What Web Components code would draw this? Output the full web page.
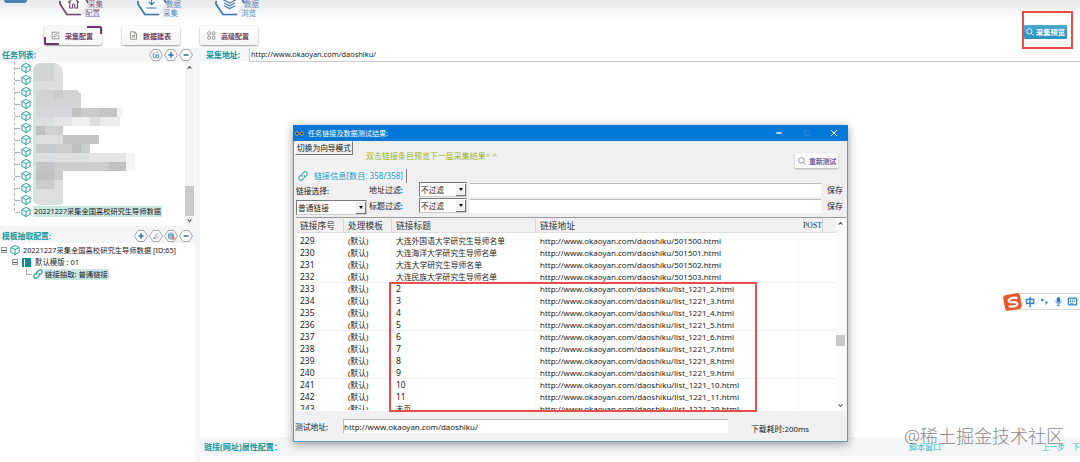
<!DOCTYPE html>
<html>
<head>
<meta charset="utf-8">
<title>采集配置</title>
<style>
    html, body {
        margin: 0;
        height: 462px;
        overflow: hidden;
        background: #fff;
    }

    body {
        font-family: "Noto Sans", "Noto Sans CJK SC", sans-serif;
        font-size: 8px;
        color: #222;
        --teal: #16989c;
        --panel: #f4f5f6;
    }
</style>
</head>
<body>
<collector-app></collector-app>

<script>
function define(name, html, setup) {
    const template = document.createElement('template');
    template.innerHTML = html;

    window.customElements.define(name, class extends HTMLElement {
        constructor() {
            super();
            this.attachShadow({ mode: 'open' });
            this.shadowRoot.appendChild(template.content.cloneNode(true));
        }

        connectedCallback() {
            if (setup && !this.ready) {
                this.ready = true;
                setup.call(this, this.shadowRoot);
            }
        }
    });
}

// one line of text, sized and tracked so that it fills the given width
define('fit-text', `
    <style>
        :host {
            display: block;
            flex: none;
            width: max-content;
            white-space: nowrap;
            line-height: 12px;
        }
    </style>
    <slot></slot>
`, function () {
    const target = Number(this.getAttribute('w'));
    if (!target) return;
    let real = this.getBoundingClientRect().width;
    const scale = Math.min(1.09, Math.max(0.88, target / real));
    this.style.fontSize = parseFloat(getComputedStyle(this).fontSize) * scale + 'px';
    real = this.getBoundingClientRect().width;
    this.style.letterSpacing = (target - real) / this.textContent.length + 'px';
    this.style.width = target + 'px';
});

const icons = {
    home: '<path d="M2 11 L12 2 L22 11 M5 9 V21 H10 V15 Q12 12 14 15 V21 H19 V9"/>',
    down: '<path d="M12 2 V15 M7 10 L12 15 L17 10 M3 21 H21"/>',
    layers: '<path d="M12 2 L22 7 L12 12 L2 7Z M2 12 L12 17 L22 12 M2 17 L12 22 L22 17"/>',
    edit: '<path d="M21 11 V21 H3 V3 H15 M8 16 L9 12 L19 2 L22 5 L12 15Z"/>',
    doc: '<path d="M4 2 H15 L20 7 V22 H4Z M15 2 V7 H20 M8 12 H16 M8 16 H16"/>',
    grid: '<rect x="2" y="2" width="7" height="8" rx="2"/><rect x="14" y="2" width="7" height="8" rx="2"/><rect x="2" y="14" width="7" height="8" rx="2"/><rect x="14" y="14" width="7" height="8" rx="2"/>',
    cube: '<path d="M12 1 L22 6 V17 L12 23 L2 17 V6Z M2 6 L12 11 L22 6 M12 11 V23"/>',
    link: '<path d="M10 14 C7 11 8 9 10 7 L14 3 C19 -1 25 5 21 10 L17 14 M14 10 C17 13 16 15 14 17 L10 21 C5 25 -1 19 3 14 L7 10"/>',
    search: '<circle cx="10" cy="10" r="8"/><path d="M16 16 L23 23"/>',
    plus: '<path d="M12 3 V21 M3 12 H21"/>',
    minus: '<path d="M4 12 H20"/>',
    import: '<path d="M3 3 V21 H21 V9 M7 7 L16 16 M16 9 V16 H9 M12 3 H19"/>',
    pick: '<path d="M5 20 L17 3 M3 21 H11"/><path d="M14 13 L21 20 M21 13 L14 20" stroke="#d77"/>',
    data: '<ellipse cx="12" cy="5" rx="8" ry="3"/><path d="M4 5 V20 Q12 25 20 20 V5 M4 10 Q12 14 20 10 M4 15 Q12 19 20 15"/><path d="M15 15 H23 V23 H15Z" stroke="#d66"/>',
    up: '<path d="M3 17 L12 7 L21 17"/>',
    chev: '<path d="M3 7 L12 17 L21 7"/>',
    mic: '<rect x="8" y="1" width="8" height="13" rx="4" fill="currentColor"/><path d="M4 10 Q5 18 12 18 Q19 18 20 10 M12 18 V23 M7 23 H17"/>',
    keys: '<rect x="1" y="3" width="22" height="18" rx="2"/><path d="M5 8 H19 M5 12 H19 M7 17 H17" stroke-dasharray="3 2"/>',
    punct: '<circle cx="6" cy="8" r="3.5" fill="currentColor" stroke="none"/><path d="M18 13 Q20 18 15 21"/><circle cx="17" cy="14" r="3" fill="currentColor" stroke="none"/>'
};

define('ui-icon', `
    <style>
        :host { display: block; flex: none; width: 12px; height: 12px; }
        svg { display: block; width: 100%; height: 100%; fill: none; stroke: currentColor; overflow: visible; }
    </style>
    <svg viewBox="0 0 24 24"></svg>
`, function (root) {
    const svg = root.querySelector('svg');
    svg.innerHTML = icons[this.getAttribute('name')] || '';
    svg.setAttribute('stroke-width', this.getAttribute('weight') || 2);
});

// large hexagon item of the main navigation, cut by the top of the window
define('nav-item', `
    <style>
        :host { display: flex; width: 78px; height: 17px; }
        svg { flex: none; width: 30px; height: 17px; overflow: visible; }
        .hex { fill: #fafafc; stroke: #d8d8de; stroke-width: 1; }
        .edge { fill: none; stroke: currentColor; stroke-width: 1.7; }
        .label { display: flex; flex-direction: column; opacity: .85; }
        ::slotted(fit-text) { line-height: 9px; }
        ::slotted(fit-text:first-child) { margin-left: -1px; }
        ::slotted(fit-text:last-child) { margin-left: -4px; }
        .glyph { fill: none; stroke: currentColor; stroke-width: 2; }
    </style>
    <svg viewBox="0 0 30 17">
        <path class="hex" d="M7 -8 H22 L30 3 L22 15 H7 L0 3Z"/>
        <path class="edge" d="M1 1 V4 L8 14.500 H22"/>
        <path class="edge" d="M27 -1 L29 3"/>
        <g class="glyph" transform="translate(8 -3.500) scale(.55)"></g>
    </svg>
    <div class="label"><slot></slot></div>
`, function (root) {
    root.querySelector('.glyph').innerHTML = icons[this.getAttribute('icon')];
});

define('sub-button', `
    <style>
        :host {
            box-sizing: border-box;
            display: flex;
            align-items: center;
            gap: 5px;
            width: 58px;
            height: 19px;
            padding-left: 7px;
            border-radius: 2px;
            background: linear-gradient(#fff, #f4f4f5);
            box-shadow: 0 1px 2px #9a9a9a, 0 0 1px #ccc;
            color: #70416a;
            font-weight: bold;
        }
        :host([active]) {
            background:
                linear-gradient(#6b3a63, #6b3a63) 100% 0 / 15px 2px no-repeat,
                linear-gradient(#6b3a63, #6b3a63) 100% 0 / 2px 8px no-repeat,
                linear-gradient(#6b3a63, #6b3a63) 0 100% / 15px 2px no-repeat,
                linear-gradient(#6b3a63, #6b3a63) 0 100% / 2px 8px no-repeat,
                #f8f8f9;
        }
        ui-icon { width: 9px; height: 9px; color: #777; }
    </style>
    <ui-icon></ui-icon><slot></slot>
`, function (root) {
    const icon = document.createElement('ui-icon');
    icon.setAttribute('name', this.getAttribute('icon'));
    root.querySelector('ui-icon').replaceWith(icon);
});

define('app-header', `
    <style>
        :host {
            display: flex;
            flex-direction: column;
            height: 48px;
            background: linear-gradient(#e6e8ed, #f8f9fa 14px, #fff 22px);
        }
        .nav { display: flex; height: 26px; }
        .logo { width: 23px; height: 3px; margin-left: 4px; border-radius: 0 0 6px 6px; background: #4684b8; }
        nav-item { color: #3a79b0; }
        nav-item:nth-of-type(1) { margin-left: 32px; color: #74476f; }
        .sub { display: flex; gap: 20px; padding-left: 44px; }
    </style>
    <div class="nav">
        <div class="logo"></div>
        <nav-item icon="home"><fit-text w="15">采集</fit-text><fit-text w="15">配置</fit-text></nav-item>
        <nav-item icon="down"><fit-text w="15">数据</fit-text><fit-text w="15">采集</fit-text></nav-item>
        <nav-item icon="layers"><fit-text w="15">数据</fit-text><fit-text w="15">浏览</fit-text></nav-item>
    </div>
    <div class="sub">
        <sub-button icon="edit" active><fit-text w="28">采集配置</fit-text></sub-button>
        <sub-button icon="doc"><fit-text w="28">数据建表</fit-text></sub-button>
        <sub-button icon="grid"><fit-text w="28">高级配置</fit-text></sub-button>
    </div>
`);

define('hex-button', `
    <style>
        :host { display: block; width: 14px; height: 12px; color: #3b78b5; }
        svg { display: block; width: 14px; height: 12px; overflow: visible; }
        .hex { fill: #fbfbfc; stroke: #8e9499; stroke-width: .8; }
        .glyph { fill: none; stroke: currentColor; }
    </style>
    <svg viewBox="0 0 14 12">
        <path class="hex" d="M4 .5 H10 L13.500 6 L10 11.500 H4 L.5 6Z"/>
        <g class="glyph"></g>
    </svg>
`, function (root) {
    const name = this.getAttribute('icon');
    const bold = name === 'plus' || name === 'minus';
    const g = root.querySelector('.glyph');
    g.innerHTML = icons[name];
    g.setAttribute('transform', bold ? 'translate(3.4 2.4) scale(.3)' : 'translate(3.4 2.4) scale(.3)');
    g.setAttribute('stroke-width', bold ? 5.5 : 2.4);
});

define('panel-title', `
    <style>
        :host {
            box-sizing: border-box;
            display: flex;
            align-items: center;
            justify-content: space-between;
            height: 14px;
            padding: 0 0 0 2px;
            color: var(--teal);
            font-weight: bold;
        }
        .tools { display: flex; gap: 1px; }
    </style>
    <slot></slot>
    <div class="tools"><slot name="tools"></slot></div>
`);

define('scroll-bar', `
    <style>
        :host {
            box-sizing: border-box;
            display: flex;
            flex-direction: column;
            align-items: center;
            width: 9px;
            padding: 3px 0;
            background: #f3f3f3;
            color: #555;
        }
        ui-icon { width: 5px; height: 5px; }
        .thumb { width: 100%; background: #c9c9c9; margin: auto 0 0; }
        .rest { flex: none; }
    </style>
    <ui-icon name="up" weight="5"></ui-icon>
    <div class="thumb"></div>
    <div class="rest"></div>
    <ui-icon name="chev" weight="5"></ui-icon>
`, function (root) {
    root.querySelector('.thumb').style.height = this.getAttribute('thumb') + 'px';
    root.querySelector('.rest').style.height = this.getAttribute('rest') + 'px';
});

define('task-list', `
    <style>
        :host { display: flex; height: 164px; background: #fff; }
        .tree {
            flex: 1;
            display: grid;
            grid-template: 1fr / 15px 17px 1fr;
            overflow: hidden;
        }
        .rail { border-right: 1px dashed #b5b5b5; height: 149px; }
        .nodes { display: flex; flex-direction: column; }
        .node { display: flex; align-items: center; height: 12px; gap: 1px; color: #2aa39b; }
        .node::before { content: ""; width: 5px; border-top: 1px dashed #aaa; }
        .node ui-icon { width: 10px; height: 10px; }
        .names { display: flex; flex-direction: column; padding-left: 1px; }
        svg { display: block; height: 144px; width: 140px; }
        .picked { align-self: flex-start; background: #cbe7e2; padding: 0 1px; height: 11px; }
        fit-text { line-height: 11px; }
        scroll-bar { margin-right: 1px; }
    </style>
    <div class="tree">
        <div class="rail"></div>
        <div class="nodes"></div>
        <div class="names">
            <svg viewBox="33 62 140 144">
                <path d="M40 63 H54 Q63 64 63 74 V203 Q60 206 54 205 H40 Q34 204 33 200 V70 Q34 64 40 63Z" fill="#dcdfe0"/>
                <path d="M40 63 H54 V81 H33 V70 Q34 64 40 63Z" fill="#d2d5d6"/>
                <path d="M36 90 H77 L81 94 V108 H36Z" fill="#d0d4d5"/>
                <rect x="54" y="90" width="9" height="9" fill="#c8cbcc"/>
                <rect x="36" y="108" width="36" height="9" fill="#d4d8da"/>
                <rect x="72" y="108" width="9" height="9" fill="#bfc0c0"/>
                <rect x="81" y="108" width="18" height="9" fill="#c9cacb"/>
                <rect x="99" y="108" width="18" height="9" fill="#c3c4c4"/>
                <rect x="117" y="108" width="6" height="9" fill="#f1f1f1"/>
                <rect x="54" y="117" width="18" height="9" fill="#e5e5e5"/>
                <rect x="72" y="117" width="18" height="9" fill="#eeeeee"/>
                <rect x="90" y="117" width="10" height="9" fill="#dddddd"/>
                <rect x="100" y="117" width="20" height="9" fill="#ececec"/>
                <rect x="36" y="126" width="9" height="9" fill="#bfc2c3"/>
                <rect x="45" y="126" width="18" height="9" fill="#ced0d1"/>
                <rect x="63" y="135" width="36" height="9" fill="#c3c4c4"/>
                <rect x="36" y="144" width="18" height="9" fill="#c8cbcb"/>
                <rect x="54" y="144" width="36" height="9" fill="#cbcccc"/>
                <rect x="72" y="144" width="9" height="9" fill="#bdbebe"/>
                <rect x="54" y="153" width="36" height="9" fill="#dedfdf"/>
                <rect x="90" y="153" width="36" height="9" fill="#e4e4e4"/>
                <rect x="36" y="162" width="18" height="9" fill="#c3c5c6"/>
                <rect x="54" y="162" width="55" height="9" fill="#cccdcd"/>
                <rect x="109" y="162" width="17" height="9" fill="#c0c1c1"/>
                <rect x="126" y="153" width="9" height="18" fill="#f6f6f6"/>
                <rect x="36" y="171" width="18" height="9" fill="#bec1c2"/>
                <rect x="54" y="171" width="9" height="9" fill="#c9cccc"/>
                <rect x="36" y="180" width="18" height="9" fill="#cacdce"/>
            </svg>
            <div class="picked"><fit-text w="127">20221227采集全国高校研究生导师数据</fit-text></div>
        </div>
    </div>
    <scroll-bar thumb="30" rest="2"></scroll-bar>
`, function (root) {
    root.querySelector('.nodes').innerHTML =
        '<div class="node"><ui-icon name="cube" weight="2.4"></ui-icon></div>'.repeat(13);
});

define('template-tree', `
    <style>
        :host { display: block; flex: 1; background: #fff; padding-top: 1px; }
        .row { display: flex; align-items: center; height: 12px; gap: 3px; padding-left: 1px; }
        .r2 { padding-left: 12px; gap: 4px; }
        .r3 { padding-left: 26px; gap: 1px; }
        .box {
            box-sizing: border-box;
            flex: none;
            width: 6px;
            height: 6px;
            border: 1px solid #999;
            display: flex;
            align-items: center;
        }
        .box::before { content: ""; width: 100%; border-top: 1px solid #444; }
        ui-icon { width: 10px; height: 10px; color: #2aa39b; }
        .tpl { box-sizing: border-box; width: 9px; height: 9px; background: linear-gradient(90deg, #128d8d 2px, #fff 2px 3px, #128d8d 3px); border-top: 1px solid #128d8d; }
        .twig { box-sizing: border-box; width: 6px; height: 6px; margin-bottom: 5px; border: dashed #aaa; border-width: 0 0 1px 1px; }
        .picked { background: #cbe7e2; height: 11px; padding: 0 1px; }
        .picked fit-text { line-height: 11px; }
    </style>
    <div class="row"><div class="box"></div><ui-icon name="cube" weight="2.4"></ui-icon><fit-text w="153">20221227采集全国高校研究生导师数据 [ID:65]</fit-text></div>
    <div class="row r2"><div class="box"></div><div class="tpl"></div><fit-text w="44">默认模版 : 01</fit-text></div>
    <div class="row r3"><div class="twig"></div><ui-icon name="link" weight="3"></ui-icon><div class="picked"><fit-text w="63">链接抽取: 普通链接</fit-text></div></div>
`);

define('side-bar', `
    <style>
        :host { display: flex; flex-direction: column; width: 195px; height: 414px; background: var(--panel); }
        .gap { height: 3px; }
        .last { margin-right: 2px; }
    </style>
    <panel-title>
        <fit-text w="34">任务列表:</fit-text>
        <hex-button slot="tools" icon="import"></hex-button>
        <hex-button slot="tools" icon="plus"></hex-button>
        <hex-button slot="tools" icon="minus" class="last"></hex-button>
    </panel-title>
    <task-list></task-list>
    <div class="gap"></div>
    <panel-title>
        <fit-text w="49">模板抽取配置:</fit-text>
        <hex-button slot="tools" icon="plus"></hex-button>
        <hex-button slot="tools" icon="pick"></hex-button>
        <hex-button slot="tools" icon="data"></hex-button>
        <hex-button slot="tools" icon="minus" class="last"></hex-button>
    </panel-title>
    <template-tree></template-tree>
`);

define('work-area', `
    <style>
        :host { display: flex; flex-direction: column; flex: 1; min-width: 0; height: 414px; }
        .address { display: flex; align-items: center; height: 13px; background: var(--panel); font-weight: bold; color: var(--teal); padding-left: 6px; }
        .field { box-sizing: border-box; flex: 1; height: 14px; margin-left: 9px; padding-left: 1px; background: #fff; border: solid #c9c9c9; border-width: 0 0 1px 1px; font-weight: normal; color: #222; display: flex; align-items: center; }
        .canvas { flex: 1; }
        .foot { display: flex; align-items: center; height: 19px; margin-bottom: 6px; background: var(--panel); color: var(--teal); font-weight: bold; padding-left: 4px; }
        .right { display: flex; margin-left: auto; font-weight: normal; color: #2bbcc8; }
        .prev { margin-left: 101px; }
        .next { margin-left: 7px; }
    </style>
    <div class="address">
        <fit-text w="34">采集地址:</fit-text>
        <div class="field"><fit-text w="125">http://www.okaoyan.com/daoshiku/</fit-text></div>
    </div>
    <div class="canvas"></div>
    <div class="foot">
        <fit-text w="78">链接(网址)属性配置：</fit-text>
        <div class="right">
            <fit-text w="32">脚本窗口</fit-text>
            <fit-text w="23" class="prev">上一步</fit-text>
            <fit-text class="next">下</fit-text>
        </div>
    </div>
`);

define('select-box', `
    <style>
        :host {
            box-sizing: border-box;
            display: flex;
            align-items: center;
            height: 15px;
            padding-left: 1px;
            background: #fff;
            border: 1px solid;
            border-color: #777 #ccc #ccc #777;
        }
        .arrow {
            box-sizing: border-box;
            width: 10px;
            height: 12px;
            margin-left: auto;
            display: grid;
            place-items: center;
            background: #f0f0f0;
            border: solid #777;
            border-width: 0 1px 1px 0;
        }
        .arrow::before { content: ""; border: solid transparent; border-width: 3px 2.5px 0; border-top-color: #111; }
    </style>
    <slot></slot><div class="arrow"></div>
`);

define('link-table', `
    <style>
        :host { display: flex; height: 193px; margin: 0 1px 0 2px; border-top: 1px solid #999; background: #fff; }
        .grid { flex: 1; display: flex; flex-direction: column; overflow: hidden; }
        .row, .head { display: grid; grid-template-columns: 48px 48px 144px 263px 1fr; flex: none; align-items: center; }
        .head { height: 14px; background: #f1f1f1; border-bottom: 1px solid #ddd; color: #333; }
        .head > * { display: flex; align-items: center; height: 12px; padding: 1px 0 0 4px; border-right: 1px solid #d5d5d5; }
        .head > .wide { border: 0; }
        .head > .last { margin-right: 13px; font-family: "Liberation Serif", serif; }
        .rows { height: 177px; overflow: hidden; padding-top: 2px; box-sizing: border-box; }
        .row { box-sizing: border-box; height: 12.04px; }
        .row:nth-child(4n) { border-bottom: 1px solid #f0f0f0; }
        .row > div { display: flex; align-items: center; height: 12px; padding-left: 4px; border-right: 1px solid #f7f7f7; }
        .row > div:last-child { border: 0; }
        scroll-bar { background: #fbfbfb; margin-right: 1px; }
    </style>
    <div class="grid">
        <div class="head">
            <div><fit-text w="35">链接序号</fit-text></div>
            <div><fit-text w="35">处理模板</fit-text></div>
            <div><fit-text w="35">链接标题</fit-text></div>
            <div class="wide"><fit-text w="35">链接地址</fit-text></div>
            <div class="last"><fit-text w="19">POST</fit-text></div>
        </div>
        <div class="rows"></div>
    </div>
    <scroll-bar thumb="11" rest="57"></scroll-bar>
`, function (root) {
    const rows = [
        ['大连外国语大学研究生导师名单', 109, '501500', 181],
        ['大连海洋大学研究生导师名单', 101, '501501', 181],
        ['大连大学研究生导师名单', 86, '501502', 181],
        ['大连民族大学研究生导师名单', 101, '501503', 181]
    ];
    for (let i = 2; i <= 11; i++) {
        rows.push([String(i), i < 10 ? 5 : 9.5, 'list_1221_' + i, i < 10 ? 194 : 199]);
    }
    rows.push(['末页', 15, 'list_1221_20', 199]);

    root.querySelector('.rows').innerHTML = rows.map(([title, tw, page, uw], i) => `
        <div class="row">
            <div><fit-text w="14.5">${229 + i}</fit-text></div>
            <div><fit-text w="20.5">(默认)</fit-text></div>
            <div><fit-text w="${tw}">${title}</fit-text></div>
            <div><fit-text w="${uw}">http://www.okaoyan.com/daoshiku/${page}.html</fit-text></div>
            <div></div>
        </div>`).join('');
});

define('result-dialog', `
    <style>
        :host {
            box-sizing: border-box;
            display: flex;
            flex-direction: column;
            width: 555px;
            height: 317px;
            background: #f0f0f0;
            border: 1px solid #5a9cc4;
            border-top: 0;
            box-shadow: 0 2px 9px rgba(0, 0, 0, .4);
            position: absolute;
            left: 293px;
            top: 125px;
        }
        .title { display: flex; align-items: center; height: 16px; background: #0078d7; color: #fff; padding-left: 2px; margin: 0 -1px; }
        .title fit-text { margin-left: 4px; }
        .eyes { width: 9px; height: 5px; overflow: visible; }
        .win { display: flex; align-items: center; margin-left: auto; width: 61px; margin-right: 11px; justify-content: space-between; }
        .win ui-icon { width: 8px; height: 8px; margin-left: -1px; }
        .max { width: 6px; height: 6px; border: 1px solid #2085db; box-sizing: border-box; }
        .top { display: flex; height: 28px; padding-left: 1px; }
        .switch { box-sizing: border-box; height: 14px; width: 58px; padding-left: 1px; border: 1px solid; border-color: #fff #777 #777 #fff; color: #111; }
        .hint { color: #9ab420; margin: 9px 0 0 13px; }
        .retest { box-sizing: border-box; display: flex; align-items: center; gap: 3px; width: 43px; height: 15px; margin: 12px 9px 0 auto; padding-left: 3px; background: #fbfbfc; box-shadow: 0 1px 2px #aaa; color: #6c6199; font-weight: bold; }
        .retest ui-icon { width: 8px; height: 8px; }
        .tab { box-sizing: border-box; display: flex; align-items: center; width: 111px; height: 14px; margin-left: 2px; padding-left: 2px; gap: 6px; color: #219ad8; background: #f4f4f4; border-right: 1px solid #8c7580; }
        .tab ui-icon { width: 10px; height: 10px; color: #2db59a; }
        .filters { display: grid; grid-template-columns: 71px 54px 47px 353px 1fr; height: 34px; padding-left: 2px; }
        .col { display: flex; flex-direction: column; gap: 1px; }
        .col select-box { --y: 0; }
        .picks { margin: -1px 0 0 -2px; width: 48px; }
        .cell { display: flex; align-items: center; height: 15px; }
        .labels, .save { margin-top: -1px; }
        .labels { padding-left: 2px; }
        .kind { gap: 2px; }
        .field { box-sizing: border-box; height: 14px; background: #fff; border-top: 1px solid #bbb; margin: 0 0 1px 2px; }
        .save { padding-left: 6px; }
        .bottom { display: flex; height: 30px; padding: 8px 0 0 1px; box-sizing: border-box; }
        .bottom > fit-text { margin-top: 2px; }
        .url { box-sizing: border-box; display: flex; align-items: center; width: 385px; height: 14px; margin-left: 15px; background: #fff; border: solid #bbb; border-width: 1px 0 0 1px; }
        .bottom > .cost { margin: 4px 0 0 23px; }
        .mark { box-sizing: border-box; position: absolute; left: 95px; top: 157px; width: 368px; height: 130px; border: 2px solid #e5504e; }
    </style>
    <div class="title">
        <svg class="eyes" viewBox="0 0 9 5"><g fill="#222" stroke="#e0b080"><circle cx="2" cy="2.500" r="1.600"/><circle cx="7" cy="2.500" r="1.600"/></g></svg>
        <fit-text w="80">任务链接及数据测试结果:</fit-text>
        <div class="win">
            <ui-icon name="minus" weight="4"></ui-icon>
            <div class="max"></div>
            <svg width="6" height="6" viewBox="0 0 6 6"><path d="M0 0 L6 6 M6 0 L0 6" stroke="#fff"/></svg>
        </div>
    </div>
    <div class="top">
        <div class="switch"><fit-text w="54">切换为向导模式</fit-text></div>
        <fit-text class="hint" w="131">双击链接条目预览下一层采集结果^ ^</fit-text>
        <div class="retest"><ui-icon name="search"></ui-icon><fit-text w="27">重新测试</fit-text></div>
    </div>
    <div class="tab"><ui-icon name="link" weight="2.5"></ui-icon><fit-text w="89">链接信息[数目: 358/358]</fit-text></div>
    <div class="filters">
        <div class="col kind">
            <div class="cell"><fit-text w="33">链接选择:</fit-text></div>
            <select-box><fit-text w="31">普通链接</fit-text></select-box>
        </div>
        <div class="col labels">
            <div class="cell"><fit-text w="34">地址过滤:</fit-text></div>
            <div class="cell"><fit-text w="34">标题过滤:</fit-text></div>
        </div>
        <div class="col picks">
            <select-box><fit-text w="23">不过滤</fit-text></select-box>
            <select-box><fit-text w="23">不过滤</fit-text></select-box>
        </div>
        <div class="col"><div class="field"></div><div class="field"></div></div>
        <div class="col save">
            <div class="cell"><fit-text w="16">保存</fit-text></div>
            <div class="cell"><fit-text w="16">保存</fit-text></div>
        </div>
    </div>
    <link-table></link-table>
    <div class="bottom">
        <fit-text w="33">测试地址:</fit-text>
        <div class="url"><fit-text w="134">http://www.okaoyan.com/daoshiku/</fit-text></div>
        <fit-text w="58" class="cost">下载耗时:200ms</fit-text>
    </div>
    <div class="mark"></div>
`);

// collect preview button with the red frame round it
define('preview-button', `
    <style>
        :host {
            box-sizing: border-box;
            display: flex;
            align-items: center;
            width: 51px;
            height: 38px;
            border: 2px solid #e94b4b;
            position: absolute;
            left: 1022px;
            top: 11px;
        }
        .btn { box-sizing: border-box; display: flex; align-items: center; gap: 2px; width: 43px; height: 14px; margin-top: 4px; padding-left: 2px; border-radius: 1px; background: linear-gradient(#4da9d2, #2c8fbc); color: #fff; font-weight: bold; }
        ui-icon { width: 8px; height: 8px; }
    </style>
    <div class="btn"><ui-icon name="search" weight="2.5"></ui-icon><fit-text w="29">采集预览</fit-text></div>
`);

define('ime-bar', `
    <style>
        :host {
            display: flex;
            align-items: center;
            position: absolute;
            left: 1004px;
            top: 293px;
            color: #2d7cc9;
        }
        .logo { display: grid; place-items: center; width: 17px; height: 16px; border-radius: 3px; background: #e8582b; transform: rotate(-10deg); z-index: 1; }
        .logo svg { width: 14px; height: 13px; }
        .bar { box-sizing: border-box; display: flex; align-items: center; gap: 5px; width: 72px; height: 17px; margin-left: -7px; padding-left: 11px; background: #fff; border: solid #d5d8dc; border-width: 1px 0; font-weight: bold; font-size: 10px; }
        ui-icon { width: 9px; height: 9px; }
    </style>
    <div class="logo"><svg viewBox="0 0 14 13"><path d="M12 3 C8 1 3 2 3 4.500 C3 7 11 5.500 11 8.500 C11 11 6 11 2 9.500" fill="none" stroke="#fff" stroke-width="2.200"/></svg></div>
    <div class="bar">
        <fit-text w="10">中</fit-text>
        <ui-icon name="punct"></ui-icon>
        <ui-icon name="mic"></ui-icon>
        <ui-icon name="keys" weight="3.2"></ui-icon>
    </div>
`);

define('water-mark', `
    <style>
        :host {
            position: absolute;
            left: 904px;
            top: 425px;
            color: #8a8a8a;
            font-size: 18px;
            font-weight: 300;
            text-shadow: 0 0 1px #fff;
        }
        fit-text { line-height: 22px; }
    </style>
    <fit-text w="160">@稀土掘金技术社区</fit-text>
`);

define('collector-app', `
    <style>
        :host { display: block; width: 1080px; height: 462px; overflow: hidden; position: relative; }
        main { display: flex; }
        .gutter { width: 5px; background: var(--panel); }
    </style>
    <app-header></app-header>
    <main>
        <side-bar></side-bar>
        <div class="gutter"></div>
        <work-area></work-area>
    </main>
    <result-dialog></result-dialog>
    <preview-button></preview-button>
    <ime-bar></ime-bar>
    <water-mark></water-mark>
`);
</script>
</body>
</html>
